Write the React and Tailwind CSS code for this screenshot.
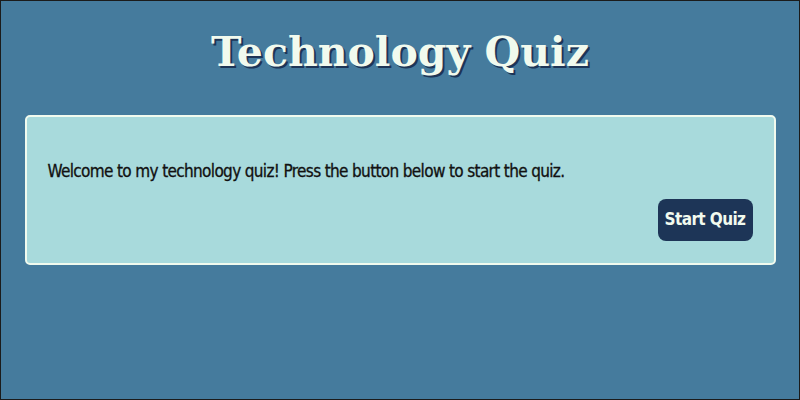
export default function App() {
  return (
    <div className="w-[800px] h-[400px] bg-[#457b9d] border border-[#1b1b1b] box-border flex flex-col items-center">
      <h1
        className="mt-[22px] text-[41px] leading-[58px] font-bold text-[#f1faee] [text-shadow:2px_2px_0_#1d3557]"
        style={{ fontFamily: '"DejaVu Serif", "Liberation Serif", serif' }}
      >
        Technology Quiz
      </h1>
      <div
        className="mt-[34px] w-[751px] h-[150px] bg-[#a8dadc] border-2 border-[#f1faee] rounded-[5px] px-[21px] pt-[40px] flex flex-col"
        style={{ fontFamily: '"DejaVu Sans Condensed", sans-serif' }}
      >
        <p className="text-[17px] leading-[28px] text-[#111] tracking-[-0.65px] [-webkit-text-stroke:0.3px_#111]">
          Welcome to my technology quiz! Press the button below to start the quiz.
        </p>
        <div className="flex justify-end mt-[14px]">
          <button className="bg-[#1d3557] text-[#f1faee] font-bold text-[17px] rounded-[8px] w-[95px] h-[42px] tracking-[-0.6px]">
            Start Quiz
          </button>
        </div>
      </div>
    </div>
  );
}
